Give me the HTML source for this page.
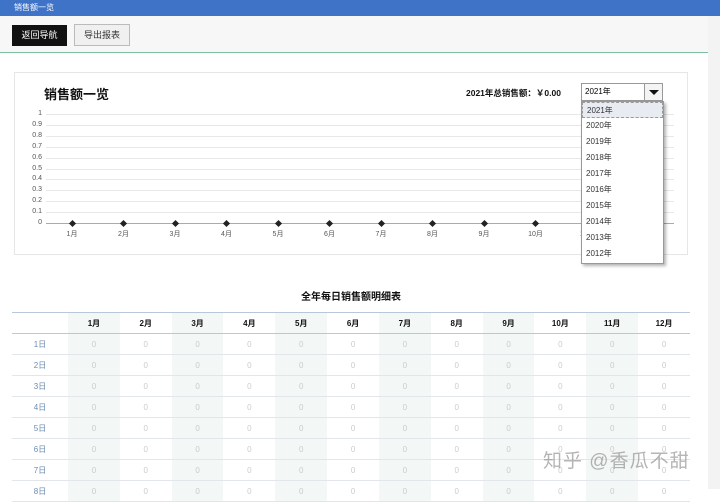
<!DOCTYPE html><html><head><meta charset="utf-8"><style>
*{margin:0;padding:0;box-sizing:border-box}
body{width:720px;height:489px;overflow:hidden;background:#fff;font-family:"Liberation Sans","Noto Sans CJK SC",sans-serif;position:relative}
.top{position:absolute;left:0;top:0;width:720px;height:16px;background:#3f73c8;color:#fff;font-size:8px;line-height:16px;padding-left:14px}
.tb{position:absolute;left:0;top:16px;width:710px;height:37px;background:#f7f7f7;border-bottom:1px solid #7cc0a0}
.b1{position:absolute;left:12px;top:9px;width:55px;height:21px;background:#111;color:#fff;font-size:9px;line-height:21px;text-align:center}
.b2{position:absolute;left:74px;top:8px;width:56px;height:22px;background:#f0f0f0;border:1px solid #bbb;font-size:9px;line-height:20px;text-align:center;color:#333}
.sb{position:absolute;left:708px;top:16px;width:12px;height:473px;background:#f3f3f3}
.box{position:absolute;left:14px;top:72px;width:674px;height:183px;border:1px solid #e6e6e6}
.abs{position:absolute}
.yl{position:absolute;width:30px;text-align:right;font-size:7px;color:#555}
.gl{position:absolute;left:46px;width:628px;height:1px;background:#e8e8e8}
.xl{position:absolute;font-size:7px;color:#555;width:30px;text-align:center}
.dot{position:absolute;width:5px;height:5px;background:#222;transform:rotate(45deg)}
.dd{position:absolute;left:581px;top:101px;width:83px;height:163px;background:#fff;border:1px solid #999;box-shadow:2px 2px 3px rgba(0,0,0,.3)}
.dd div{height:16px;font-size:8px;line-height:16px;padding-left:4px;color:#333}
table{position:absolute;left:12px;top:312px;width:678px;border-collapse:collapse;font-size:8px;table-layout:fixed}
td,th{height:21px;text-align:center;border-bottom:1px solid #e2e6ea}
th{font-weight:bold;color:#111;border-top:1px solid #b8c8d8;border-bottom:1px solid #b8c8d8}
td{color:#ccc}
td:first-child{color:#6a8cb0}
.s{background:#f3f7f5}
</style></head><body>
<div class="top">销售额一览</div>
<div class="tb"><div class="b1">返回导航</div><div class="b2">导出报表</div></div>
<div class="sb"></div>
<div class="box">
<div class="abs" style="left:29px;top:11px;font-size:13px;font-weight:bold;color:#111">销售额一览</div>
<div class="abs" style="left:451px;top:14px;font-size:8.5px;font-weight:bold;color:#111">2021年总销售额：￥0.00</div>
<div class="abs" style="left:566px;top:10px;width:82px;height:18px;border:1px solid #999;background:#fff;font-size:8px;line-height:16px;padding-left:3px">2021年<div class="abs" style="right:0;top:0;width:18px;height:16px;border-left:1px solid #999;background:#f4f4f4"><div class="abs" style="left:4px;top:6px;border-left:5px solid transparent;border-right:5px solid transparent;border-top:5px solid #111"></div></div></div>
</div>
<div id="ch"></div>
<div class="dd"><div style="background:#e8ecf2;border:1px dashed #999">2021年</div><div>2020年</div><div>2019年</div><div>2018年</div><div>2017年</div><div>2016年</div><div>2015年</div><div>2014年</div><div>2013年</div><div>2012年</div></div>
<div class="abs" style="left:0;top:288px;width:702px;text-align:center;font-size:10px;font-weight:bold;color:#111">全年每日销售额明细表</div>
<table id="t"></table>
<div class="abs" style="left:543px;top:446px;font-size:19px;color:rgba(120,120,120,.55);letter-spacing:1px">知乎 @香瓜不甜</div>
<script>
var h='',labs=['1','0.9','0.8','0.7','0.6','0.5','0.4','0.3','0.2','0.1','0'];
for(var i=0;i<11;i++){var y=114+i*10.9;h+='<div class="yl" style="left:12px;top:'+(y-4)+'px">'+labs[i]+'</div><div class="gl" style="top:'+y+'px;'+(i==10?'background:#aaa':'')+'"></div>';}
for(var m=0;m<11;m++){var x=72+m*51.5;h+='<div class="dot" style="left:'+(x-2.5)+'px;top:220.5px"></div><div class="xl" style="left:'+(x-15)+'px;top:229px">'+(m+1)+'月</div>';}
document.getElementById('ch').innerHTML=h;
var t='<colgroup><col style="width:56px">';for(m=1;m<=12;m++)t+='<col style="width:51.83px">';t+='</colgroup><tr><th></th>';for(m=1;m<=12;m++)t+='<th'+(m%2?' class="s"':'')+'>'+m+'月</th>';t+='</tr>';
for(var d=1;d<=8;d++){t+='<tr><td>'+d+'日</td>';for(m=1;m<=12;m++)t+='<td'+(m%2?' class="s"':'')+'>0</td>';t+='</tr>';}
document.getElementById('t').innerHTML=t;
</script>
</body></html>
